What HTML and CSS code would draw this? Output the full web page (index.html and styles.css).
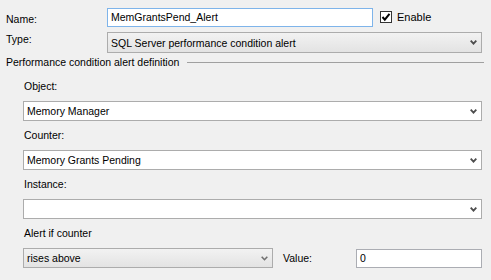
FILE: index.html
```html
<!DOCTYPE html>
<html>
<head>
<meta charset="utf-8">
<link rel="stylesheet" href="styles.css">
</head>
<body>
<div class="form">
  <div class="row row-name">
    <label class="lbl lbl-name">Name:</label>
    <div class="textbox name-box focused">MemGrantsPend_Alert</div>
    <div class="check">
      <span class="box"><svg width="10" height="10" viewBox="0 0 10 10"><path d="M1.5 5 L3.8 7.6 L8.5 1.8" fill="none" stroke="#000" stroke-width="2"/></svg></span>
      <span class="check-lbl">Enable</span>
    </div>
  </div>
  <div class="row row-type">
    <label class="lbl lbl-type">Type:</label>
    <div class="combo combo-gray type-box"><span class="val">SQL Server performance condition alert</span><svg class="chev" width="7" height="5" viewBox="0 0 7 5"><path d="M0.7 0.7 L3.5 3.7 L6.3 0.7" fill="none" stroke="#4d4d4d" stroke-width="1.8"/></svg></div>
  </div>
  <div class="legend"><span>Performance condition alert definition</span><span class="rule"></span></div>
  <div class="group">
    <div class="field-lbl first">Object:</div>
    <div class="combo"><span class="val">Memory Manager</span><svg class="chev" width="7" height="5" viewBox="0 0 7 5"><path d="M0.7 0.7 L3.5 3.7 L6.3 0.7" fill="none" stroke="#4d4d4d" stroke-width="1.8"/></svg></div>
    <div class="field-lbl">Counter:</div>
    <div class="combo"><span class="val">Memory Grants Pending</span><svg class="chev" width="7" height="5" viewBox="0 0 7 5"><path d="M0.7 0.7 L3.5 3.7 L6.3 0.7" fill="none" stroke="#4d4d4d" stroke-width="1.8"/></svg></div>
    <div class="field-lbl">Instance:</div>
    <div class="combo"><span class="val"></span><svg class="chev" width="7" height="5" viewBox="0 0 7 5"><path d="M0.7 0.7 L3.5 3.7 L6.3 0.7" fill="none" stroke="#4d4d4d" stroke-width="1.8"/></svg></div>
    <div class="field-lbl">Alert if counter</div>
    <div class="row-alert">
      <div class="combo combo-gray rises"><span class="val">rises above</span><svg class="chev" width="7" height="5" viewBox="0 0 7 5"><path d="M0.7 0.7 L3.5 3.7 L6.3 0.7" fill="none" stroke="#707070" stroke-width="1.6"/></svg></div>
      <label class="value-lbl">Value:</label>
      <div class="textbox value-box">0</div>
    </div>
  </div>
</div>
</body>
</html>
```

FILE: styles.css
```css
html, body {
  margin: 0;
  padding: 0;
  background: #f0f0f0;
}
body {
  font-family: "Liberation Sans", Arial, sans-serif;
  font-size: 10.5px;
  color: #000;
  width: 491px;
  height: 280px;
  overflow: hidden;
}
.form {
  padding: 8px 0 0 6px;
}
.row {
  display: flex;
  align-items: flex-start;
}
.lbl {
  width: 101px;
  flex: none;
  line-height: 14px;
}
.lbl-name {
  padding-top: 4px;
}
.textbox {
  box-sizing: border-box;
  height: 19px;
  background: #fff;
  border: 1px solid #abadb3;
  padding: 0 3px;
  line-height: 17px;
}
.name-box {
  width: 266px;
}
.focused {
  border-color: #7eb4ea;
}
.check {
  display: flex;
  align-items: center;
  margin-left: 7px;
  margin-top: 3px;
}
.box {
  box-sizing: border-box;
  width: 12px;
  height: 12px;
  border: 1px solid #333;
  background: #fff;
  display: flex;
  align-items: center;
  justify-content: center;
}
.check-lbl {
  margin-left: 5px;
  font-size: 11px;
}
.row-type {
  margin-top: 5px;
}
.combo {
  box-sizing: border-box;
  height: 20px;
  background: #fff;
  border: 1px solid #acacac;
  display: flex;
  align-items: center;
  padding: 0 4px 0 3px;
}
.combo .val {
  flex: 1;
}
.combo-gray {
  background: linear-gradient(#f2f2f2, #e3e3e3);
}
.type-box {
  width: 375px;
  height: 21px;
}
.chev {
  flex: none;
}
.legend {
  display: flex;
  align-items: center;
  margin-top: 2px;
  height: 14px;
  line-height: 14px;
  width: 478px;
}
.rule {
  flex: 1;
  height: 0;
  border-top: 1px solid #a0a0a0;
  margin-left: 8px;
}
.group {
  padding-left: 17px;
  width: 459px;
}
.field-lbl {
  line-height: 14px;
  margin-top: 7px;
  margin-bottom: 8px;
  padding-left: 1px;
}
.field-lbl.first {
  margin-top: 10px;
}
.group .combo {
  width: 459px;
}
.row-alert {
  display: flex;
  align-items: center;
}
.group .rises {
  width: 250px;
}
.value-lbl {
  margin-left: 10px;
  width: 73px;
}
.value-box {
  width: 126px;
}
```
